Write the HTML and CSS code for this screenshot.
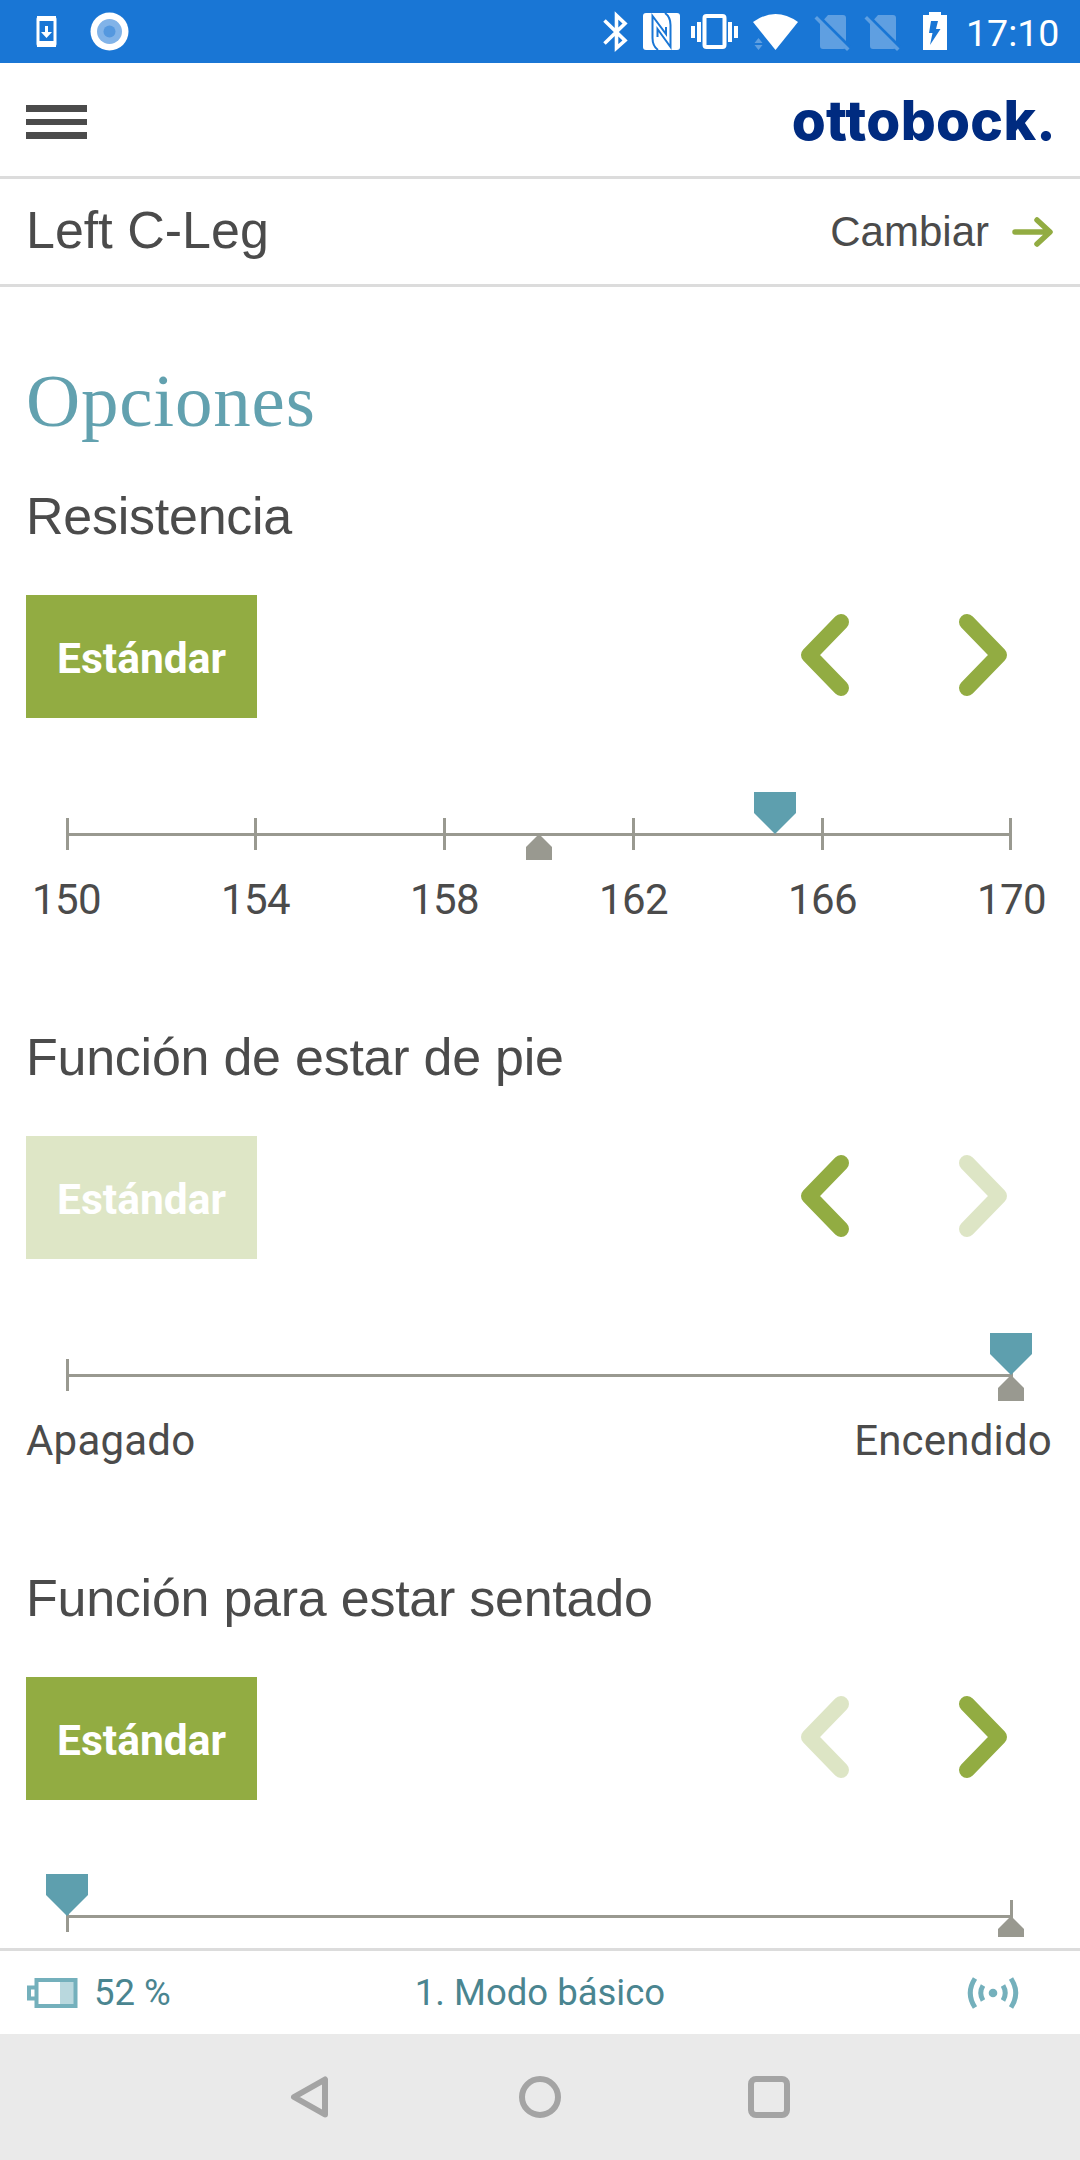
FILE: index.html
```html
<!DOCTYPE html>
<html lang="es">
<head>
    <meta charset="UTF-8">
    <meta name="viewport" content="width=device-width, initial-scale=1.0">
    <title>Opciones</title>
    <link rel="stylesheet" href="styles.css">
</head>
<body>
    <div class="status-bar">
        <svg width="140" height="63" viewBox="0 0 140 63">
            <rect x="38" y="18" width="17" height="27" rx="1" fill="none" stroke="#fff" stroke-width="3"/>
            <path d="M37 16h19v5H37zM37 41h19v6H37z" fill="#fff"/>
            <path d="M45 26h3v6h4l-5.500 6-5.500-6h4z" fill="#fff"/>
            <circle cx="109.500" cy="31.500" r="19" fill="#fff"/>
            <circle cx="109.500" cy="31.500" r="12.500" fill="#81b3e8"/>
            <circle cx="109.500" cy="31.500" r="6" fill="#5498df"/>
        </svg>
        <svg width="360" height="63" viewBox="595 0 360 63">
            <!-- bluetooth -->
            <path d="M604.500 20.500L625 40.500L616.500 48V15.500L625 23.500L604.500 43.500" fill="none" stroke="#fff" stroke-width="3.600"/>
            <!-- nfc -->
            <rect x="643" y="13" width="37" height="37" rx="3" fill="#fff"/>
            <path d="M658 50Q652.500 46 652.500 38V16L666 34V27M665 13Q670.500 17 670.500 25V47L657.500 29V37" fill="none" stroke="#1976d5" stroke-width="2"/>
            <!-- vibrate -->
            <rect x="704.500" y="16" width="20" height="31" rx="2" fill="none" stroke="#fff" stroke-width="4"/>
            <path d="M691 26h4v12h-4zM697 22h4v20h-4zM728 22h4v20h-4zM734 26h4v12h-4z" fill="#fff"/>
            <!-- wifi -->
            <path d="M753 22Q775.500 6 798 22L775.500 50z" fill="#fff"/>
            <path d="M758.500 38l4 5h-8zM758.500 50l4-5h-8z" fill="#fff" opacity=".3"/>
            <!-- no sim -->
            <g id="sim" fill="#5f9fe1">
                <path d="M828 15h15q3 0 3 3v24L824 19.500zM820 22.500L845.500 48q-1 1-2.500 1h-20q-3 0-3-3z"/>
                <path d="M817 16L849.500 48.500L847 51L814.500 18.500z"/>
                <path d="M819 15.500L850 46" stroke="#1976d5" stroke-width="1.500"/>
            </g>
            <use href="#sim" x="50"/>
            <!-- battery -->
            <path d="M923 15h6v-3h12v3h6v35h-24z" fill="#fff"/>
            <path d="M931 21h7l-2 8h4.500L930 45l2.500-12H929z" fill="#1976d5"/>
        </svg>
        <span class="clock">17:10</span>
    </div>

    <header class="header">
        <div class="menu">
            <span></span>
            <span></span>
            <span></span>
        </div>
        <div class="logo">o<span>t</span>tobock.</div>
    </header>

    <div class="device">
        <span class="device-name">Left C-Leg</span>
        <a class="change">Cambiar
            <svg width="42" height="32" viewBox="0 0 42 32">
                <path d="M3 16H37M25 4L38 16L25 28" fill="none" stroke="#92ac42" stroke-width="5.500" stroke-linecap="round" stroke-linejoin="round"/>
            </svg>
        </a>
    </div>

    <main class="content">
        <h1>Opciones</h1>

        <section class="option">
            <h2>Resistencia</h2>
            <div class="controls">
                <button class="standard">Estándar</button>
                <svg class="arrow" viewBox="0 0 50 82"><path d="M41 8L9 41L41 74"/></svg>
                <svg class="arrow" viewBox="0 0 50 82"><path d="M9 8L41 41L9 74"/></svg>
            </div>
            <div class="slider">
                <div class="ticks"><i></i><i></i><i></i><i></i><i></i><i></i></div>
                <div class="mark" style="left: 50%"></div>
                <div class="thumb" style="left: 75%"></div>
            </div>
            <div class="labels numbers">
                <span>150</span><span>154</span><span>158</span><span>162</span><span>166</span><span>170</span>
            </div>
        </section>

        <section class="option">
            <h2>Función de estar de pie</h2>
            <div class="controls">
                <button class="standard disabled">Estándar</button>
                <svg class="arrow" viewBox="0 0 50 82"><path d="M41 8L9 41L41 74"/></svg>
                <svg class="arrow disabled" viewBox="0 0 50 82"><path d="M9 8L41 41L9 74"/></svg>
            </div>
            <div class="slider">
                <div class="ticks"><i></i><i></i></div>
                <div class="mark" style="left: 100%"></div>
                <div class="thumb" style="left: 100%"></div>
            </div>
            <div class="labels">
                <span>Apagado</span><span>Encendido</span>
            </div>
        </section>

        <section class="option">
            <h2>Función para estar sentado</h2>
            <div class="controls">
                <button class="standard">Estándar</button>
                <svg class="arrow disabled" viewBox="0 0 50 82"><path d="M41 8L9 41L41 74"/></svg>
                <svg class="arrow" viewBox="0 0 50 82"><path d="M9 8L41 41L9 74"/></svg>
            </div>
            <div class="slider">
                <div class="ticks"><i></i><i></i></div>
                <div class="mark" style="left: 100%"></div>
                <div class="thumb" style="left: 0%"></div>
            </div>
        </section>
    </main>

    <footer class="footer">
        <div class="battery">
            <svg width="52" height="30" viewBox="0 0 52 30">
                <rect x="33" y="3" width="15" height="24" fill="#b9d8de"/>
                <rect x="9.500" y="2" width="39" height="26" fill="none" stroke="#74b0bc" stroke-width="4"/>
                <path d="M9 9.500H2V20.500H9" fill="none" stroke="#74b0bc" stroke-width="4"/>
            </svg>
            52 %
        </div>
        <div class="mode">1. Modo básico</div>
        <div class="signal">
            <svg width="52" height="34" viewBox="0 0 52 34">
                <circle cx="26" cy="17" r="4.300" fill="#74b0bc"/>
                <g fill="none" stroke="#74b0bc" stroke-width="5">
                    <path d="M8 2.500Q-1.500 17 8 31.500M44 2.500Q53.500 17 44 31.500"/>
                    <path d="M16 9.500Q11.500 17 16 24.500M36 9.500Q40.500 17 36 24.500"/>
                </g>
            </svg>
        </div>
    </footer>

    <nav class="nav-bar">
        <svg width="42" height="42" viewBox="0 0 42 42"><path d="M4 21L35 3.500V38.500z"/></svg>
        <svg width="42" height="42" viewBox="0 0 42 42"><circle cx="21" cy="21" r="18"/></svg>
        <svg width="42" height="42" viewBox="0 0 42 42"><rect x="3" y="3" width="36" height="36" rx="5"/></svg>
    </nav>
</body>
</html>
```
FILE: styles.css
```css
* {
    box-sizing: border-box;
}

body {
    margin: 0;
    height: 2160px;
    display: flex;
    flex-direction: column;
    overflow: hidden;
    background-color: #fff;
    color: #4b4b4b;
    font-family: Roboto, sans-serif;
}

svg {
    display: block;
    flex: none;
}

.status-bar {
    height: 63px;
    display: flex;
    align-items: center;
    background-color: #1976d5;
    color: #fff;
}

.status-bar svg:first-child {
    margin-right: 455px;
}

.clock {
    margin-left: 11px;
    padding-top: 2px;
    font-size: 37.5px;
    line-height: 44px;
}

.header {
    height: 116px;
    display: flex;
    justify-content: space-between;
    align-items: center;
    padding: 0 24px 0 26px;
    border-bottom: 3px solid #dcdcdc;
}

.menu {
    width: 61px;
    padding-top: 5px;
    display: flex;
    flex-direction: column;
    gap: 7px;
}

.menu span {
    height: 6.700px;
    background-color: #4b4b4b;
}

.logo {
    padding-top: 1px;
    font-family: Inter, sans-serif;
    font-weight: 800;
    font-size: 55px;
    line-height: 66px;
    letter-spacing: 0.3px;
    color: #002b80;
}

/* joins the crossbars of the double t */
.logo span {
    letter-spacing: -1.5px;
}

.device {
    height: 108px;
    display: flex;
    justify-content: space-between;
    align-items: center;
    padding: 0 26px;
    border-bottom: 3px solid #dcdcdc;
    font-family: "Liberation Sans", Arial, sans-serif;
}

.device-name {
    padding-bottom: 4px;
    font-size: 52px;
    line-height: 60px;
}

.change {
    display: flex;
    align-items: center;
    gap: 23px;
    font-size: 42px;
}

.content {
    height: 1650px;
    overflow: hidden;
    padding: 0 28px 0 26px;
}

h1,
h2 {
    margin: 0;
    font-weight: normal;
}

h1 {
    padding-top: 71px;
    height: 199px;
    font-family: Georgia, "Liberation Serif", serif;
    font-size: 75px;
    line-height: 86px;
    letter-spacing: 0.8px;
    color: #62a1af;
}

.option {
    height: 541px;
}

h2 {
    height: 109px;
    font-family: "Liberation Sans", Arial, sans-serif;
    font-size: 52px;
    line-height: 60px;
    letter-spacing: -0.25px;
}

.controls {
    height: 123px;
    display: flex;
    align-items: flex-start;
    padding-right: 44px;
}

.standard {
    width: 231px;
    height: 123px;
    margin-right: auto;
    padding: 4px 0 0;
    border: none;
    background-color: #92ac42;
    color: #fff;
    font-family: Roboto, sans-serif;
    font-size: 42.5px;
    font-weight: bold;
}

.standard.disabled {
    background-color: #dee6c6;
}

.arrow {
    width: 50px;
    height: 82px;
    margin-top: 19px;
    fill: none;
    stroke: #92ac42;
    stroke-width: 16;
    stroke-linecap: round;
    stroke-linejoin: round;
}

.arrow + .arrow {
    margin-left: 108px;
}

.arrow.disabled {
    opacity: 0.3;
}

.slider {
    position: relative;
    height: 32px;
    margin: 100px 41px 0;
    background: linear-gradient(#999990, #999990) center / 100% 3px no-repeat;
}

.ticks {
    height: 32px;
    margin: 0 -1.500px;
    display: flex;
    justify-content: space-between;
}

.ticks i {
    width: 3px;
    background-color: #999990;
}

/* pointers sit over the slider line */
.thumb,
.mark {
    position: absolute;
    transform: translateX(-50%);
}

.thumb {
    top: -26px;
    width: 42px;
    height: 42px;
    background-color: #5e9fae;
    clip-path: polygon(0 0, 100% 0, 100% 50%, 50% 100%, 0 50%);
}

.mark {
    top: 16px;
    width: 26px;
    height: 26px;
    background-color: #999990;
    clip-path: polygon(50% 0, 100% 50%, 100% 100%, 0 100%, 0 50%);
}

.labels {
    display: flex;
    justify-content: space-between;
    margin-top: 25px;
    font-size: 42px;
    line-height: 50px;
    letter-spacing: 0.2px;
}

.numbers {
    margin-left: 6px;
    margin-right: 6px;
    letter-spacing: -0.6px;
}

.footer {
    height: 86px;
    margin-top: 11px;
    display: grid;
    grid-template-columns: 1fr auto 1fr;
    align-items: center;
    padding: 0 27px;
    border-top: 3px solid #dcdcdc;
    color: #4a8590;
    font-size: 36.5px;
    line-height: 44px;
}

.battery {
    display: flex;
    align-items: center;
    gap: 15px;
}

.signal {
    justify-self: end;
    margin-right: 34px;
}

.nav-bar {
    height: 126px;
    display: flex;
    justify-content: center;
    align-items: center;
    gap: 187px;
    background-color: #eaeaea;
}

.nav-bar svg {
    fill: none;
    stroke: #a4a4a4;
    stroke-width: 6;
    stroke-linejoin: round;
}
```
